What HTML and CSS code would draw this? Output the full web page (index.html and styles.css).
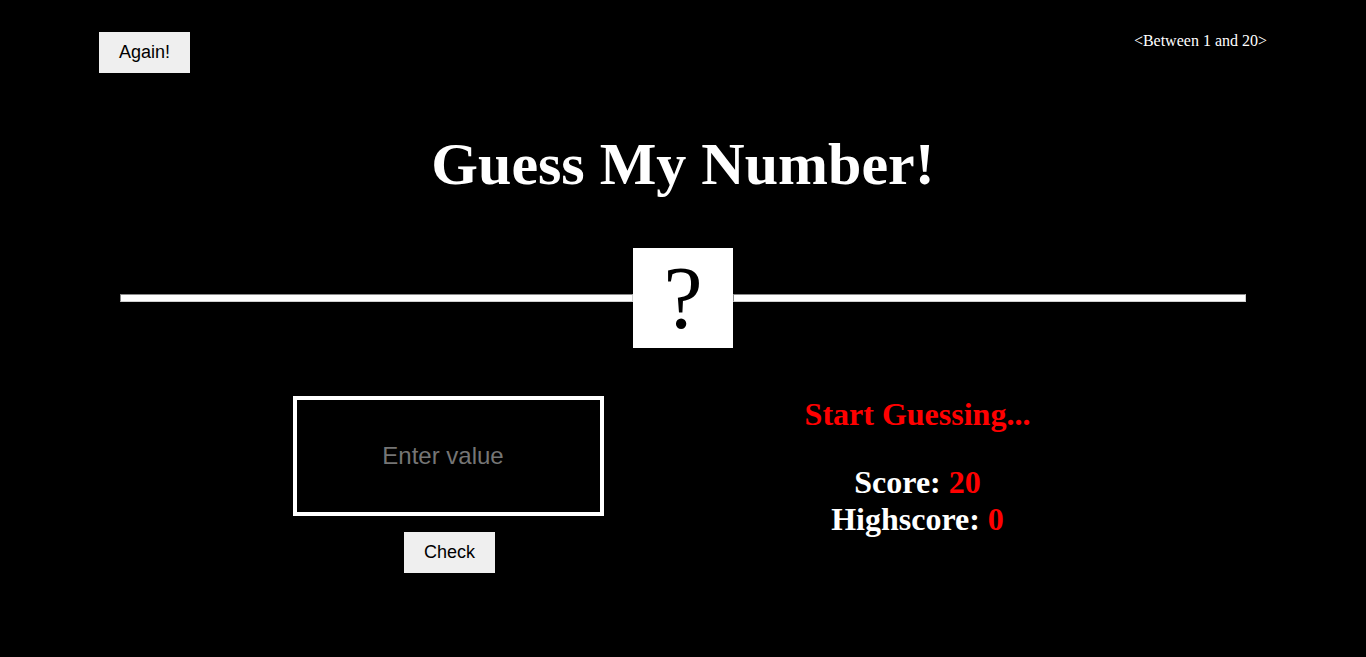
FILE: index.html
```html
<!DOCTYPE html>
<html lang="en">
<head>
<meta charset="utf-8">
<title>Guess My Number!</title>
<link rel="stylesheet" href="styles.css">
</head>
<body>
<header class="top">
  <button class="btn again">Again!</button>
  <p class="between">&lt;Between 1 and 20&gt;</p>
</header>
<h1 class="title">Guess My Number!</h1>
<div class="number-row">
  <div class="rule"></div>
  <div class="number">?</div>
  <div class="rule"></div>
</div>
<main class="main">
  <section class="left">
    <input type="number" class="guess" placeholder="Enter value">
    <button class="btn check">Check</button>
  </section>
  <section class="right">
    <p class="message">Start Guessing...</p>
    <p class="label">Score: <span class="val">20</span></p>
    <p class="label">Highscore: <span class="val">0</span></p>
  </section>
</main>
</body>
</html>
```
FILE: styles.css
```css
* { box-sizing: border-box; }
html, body { height: 100%; }
body {
  margin: 0;
  background: #000;
  color: #fff;
  font-family: "Liberation Serif", "Times New Roman", serif;
}
.top {
  display: flex;
  justify-content: space-between;
  align-items: flex-start;
  padding: 32px 99px 0;
}
.btn {
  font-family: "Liberation Sans", Arial, sans-serif;
  font-size: 18px;
  line-height: 21px;
  padding: 10px 20px;
  width: 91px;
  border: none;
  background: #efefef;
  color: #000;
  cursor: pointer;
}
.between {
  margin: 0;
  font-size: 16px;
  line-height: 18px;
}
.title {
  margin: 57px 0 49px;
  text-align: center;
  font-size: 60px;
  line-height: 69px;
  font-weight: bold;
}
.number-row {
  display: flex;
  align-items: center;
  padding: 0 120px;
}
.rule {
  flex: 1;
  height: 8px;
  background: #fff;
  border-top: 1px solid #8a8a8a;
  border-left: 1px solid #8a8a8a;
  border-bottom: 1px solid #d0d0d0;
  border-right: 1px solid #d0d0d0;
}
.number {
  width: 100px;
  height: 100px;
  background: #fff;
  color: #000;
  font-size: 88px;
  line-height: 100px;
  text-align: center;
}
.main {
  display: flex;
  justify-content: center;
  gap: 158px;
  margin-top: 48px;
  padding: 0 2px;
}
.left, .right {
  width: 311px;
  display: flex;
  flex-direction: column;
  align-items: center;
}
.guess {
  width: 311px;
  height: 120px;
  border: 4px solid #fff;
  background: #000;
  color: #fff;
  font-family: "Liberation Sans", Arial, sans-serif;
  font-size: 24px;
  text-align: center;
  padding: 0 0 0 4px;
  outline: none;
}
.guess::placeholder { color: #757575; }
.check { margin-top: 16px; margin-left: 2px; }
.right p {
  margin: 0;
  font-size: 32px;
  line-height: 37px;
  font-weight: bold;
  white-space: nowrap;
}
.message {
  color: #ff0000;
  margin-bottom: 31px !important;
}
.val { color: #ff0000; }
```
